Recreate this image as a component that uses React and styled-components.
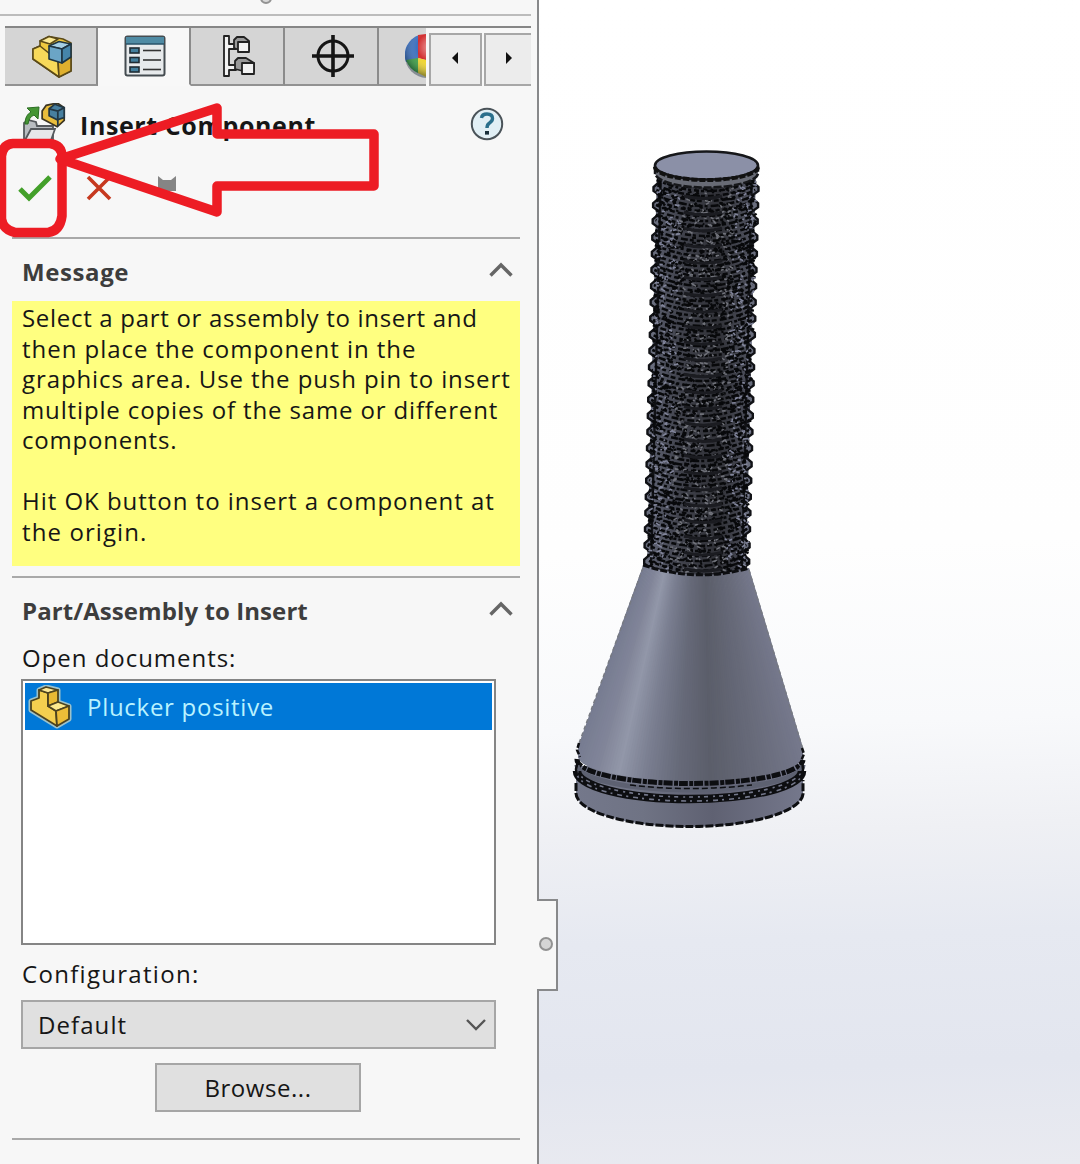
import React from "react";
import styled, { createGlobalStyle } from "styled-components";

const Global = createGlobalStyle`
  * { box-sizing: border-box; }
  body { margin: 0; font-family: "Open Sans", "Noto Sans", sans-serif; color: #161616; }
`;

const Screen = styled.div`
  position: relative;
  display: flex;
  width: 1080px;
  height: 1164px;
  overflow: hidden;
`;
const Panel = styled.aside`
  width: 539px;
  height: 1164px;
  flex: none;
  display: flex;
  flex-direction: column;
  background: #f7f7f7;
  border-right: 2px solid #88898b;
`;
const Splitter = styled.div`
  height: 16px;
  width: 531px;
  flex: none;
  display: flex;
  justify-content: center;
  border-bottom: 2px solid #bcbcbc;
`;
const Grip = styled.i`
  width: 12px;
  height: 12px;
  margin-top: -8px;
  border: 2px solid #929292;
  border-radius: 50%;
  background: #d9d9d9;
`;
const TabBar = styled.nav`
  display: flex;
  width: 526px;
  height: 60px;
  margin: 10px 0 0 5px;
  flex: none;
  border-top: 2px solid #868686;
`;
const Tab = styled.div`
  display: flex;
  align-items: center;
  justify-content: ${(p) => (p.$clipped ? "flex-end" : "center")};
  width: ${(p) => p.$w}px;
  padding-left: ${(p) => (p.$clipped ? 0 : 3)}px;
  overflow: hidden;
  background: ${(p) => (p.$active ? "#f8f8f8" : "#d5d5d5")};
  border-right: ${(p) => (p.$clipped ? 0 : 2)}px solid #8b8b8b;
  border-bottom: 2px solid ${(p) => (p.$active ? "#f8f8f8" : "#929292")};
`;
const Scroller = styled.div`
  display: flex;
  gap: 2px;
  margin: 5px 0 0 3px;
  width: 102px;
`;
const ScrollButton = styled.div`
  width: ${(p) => p.$w}px;
  display: flex;
  align-items: center;
  justify-content: center;
  padding-bottom: 4px;
  background: #ececec;
  border: 2px solid #a7a7a7;
  border-right-width: ${(p) => (p.$last ? 0 : 2)}px;
`;
const TitleRow = styled.header`
  display: flex;
  align-items: center;
  height: 56px;
  margin-top: 10px;
  padding: 0 33px 0 19px;
  flex: none;
`;
const Title = styled.h1`
  flex: 1;
  margin: 2px 0 0 13px;
  font-size: 25px;
  font-weight: 700;
  letter-spacing: ${(p) => p.$track || 0}px;
  white-space: nowrap;
`;
const Actions = styled.div`
  display: flex;
  align-items: center;
  height: 85px;
  padding: 0 0 13px 18px;
  flex: none;
`;
const Gap = styled.span`
  width: ${(p) => p.$w}px;
`;
const Divider = styled.hr`
  width: 508px;
  height: 2px;
  margin: 0 0 0 12px;
  border: 0;
  flex: none;
  background: #a9a9a9;
`;
const SectionHead = styled.div`
  display: flex;
  align-items: center;
  justify-content: space-between;
  height: ${(p) => p.$h}px;
  padding: ${(p) => p.$top || 0}px 24px 0 22px;
  flex: none;
  color: #3d3d3d;
  svg { margin-bottom: 4px; }
`;
const Heading = styled.h2`
  margin: 0 0 2px;
  font-size: 24px;
  font-weight: 700;
  letter-spacing: ${(p) => p.$track}px;
  white-space: nowrap;
`;
const Message = styled.div`
  width: 508px;
  height: 265px;
  margin: 0 0 10px 12px;
  padding: 2px 0 0 10px;
  flex: none;
  background: #ffff80;
`;
const Line = styled.div`
  height: 30.5px;
  line-height: 30.5px;
  font-size: 24px;
  letter-spacing: ${(p) => p.$track || 0}px;
  white-space: nowrap;
`;
const Label = styled.div`
  height: ${(p) => p.$h}px;
  padding: ${(p) => p.$top}px 0 0 22px;
  line-height: 30px;
  font-size: 24px;
  flex: none;
  letter-spacing: ${(p) => p.$track || 0}px;
`;
const List = styled.div`
  width: 475px;
  height: 266px;
  margin-left: 21px;
  padding: 2px;
  flex: none;
  border: 2px solid #858585;
  background: #fff;
`;
const Item = styled.div`
  display: flex;
  align-items: center;
  gap: 15px;
  height: 47px;
  padding-left: 3px;
  color: #b9f2ff;
  background: #0078d7;
  font-size: 24px;
  letter-spacing: ${(p) => p.$track}px;
`;
const Select = styled.div`
  display: flex;
  align-items: center;
  justify-content: space-between;
  width: 475px;
  height: 49px;
  margin-left: 21px;
  padding: 0 7px 0 15px;
  border: 2px solid #a6a6a6;
  background: #e0e0e0;
  flex: none;
  font-size: 24px;
  letter-spacing: ${(p) => p.$track}px;
`;
const Button = styled.div`
  display: flex;
  align-items: center;
  justify-content: center;
  width: 206px;
  height: 49px;
  margin: 14px 0 26px 155px;
  border: 2px solid #a6a6a6;
  background: #e0e0e0;
  flex: none;
  font-size: 24px;
  letter-spacing: ${(p) => p.$track}px;
`;
const Viewport = styled.main`
  flex: 1;
  background: linear-gradient(178deg, #fff 0%, #fefefe 47%, #f8f9fb 62%, #eff0f4 71%, #e6e9f1 80%, #e3e6ef 91%, #e9eaf0 100%);
`;
const Drawing = styled.svg`
  display: block;
`;
const PanelHandle = styled.div`
  position: absolute;
  left: 537px;
  top: 899px;
  width: 21px;
  height: 92px;
  display: flex;
  align-items: center;
  padding: 0 0 3px 2px;
  background: #f7f7f7;
  border: 2px solid #88898b;
  border-left: 0;
`;
const HandleDot = styled.i`
  width: 14px;
  height: 14px;
  border: 2px solid #929292;
  border-radius: 50%;
  background: #d5d5d5;
`;
const Annotation = styled.svg`
  position: absolute;
  left: 0;
  top: 0;
  pointer-events: none;
`;

const Assembly = ({ w, h }) => (
  <svg width={w} height={h} viewBox="0 0 42 43">
    <g stroke="#5b4a18" strokeWidth="1.6" strokeLinejoin="round">
      <path d="M2 14 L9 11 V6 L18 1.500 L32 4 L40 8 V36 L28 42 L2 24 Z" fill="#f0c93f" />
      <path d="M9 6 L18 1.500 L27 4 L19 9 Z" fill="#fbe994" />
      <path d="M2 14 L9 11 L19 19 L27 26 L28 42 L2 24 Z" fill="#f7d95a" />
      <path d="M27 26 L40 22 V36 L28 42 Z" fill="#dfb02e" />
    </g>
    <g stroke="#1f3542" strokeWidth="1.6" strokeLinejoin="round">
      <path d="M18 11 L28 6.500 L40 9 L31 14 Z" fill="#a5cfe4" />
      <path d="M18 11 L31 14 V28 L18 24 Z" fill="#6ba5c6" />
      <path d="M31 14 L40 9 V22 L31 28 Z" fill="#4585aa" />
    </g>
  </svg>
);

const Properties = () => (
  <svg width="42" height="42" viewBox="0 0 42 42">
    <rect x="1.500" y="1.500" width="39" height="39" rx="2" fill="#e7eaec" stroke="#454c51" strokeWidth="2" />
    <rect x="2" y="2" width="38" height="7" fill="#4f8ba4" />
    <path d="M2 9H40" stroke="#28536a" strokeWidth="1.500" />
    {[13, 22.5, 32].map((y) => (
      <g key={y}>
        <rect x="6" y={y} width="9" height="5" fill="#437f9d" stroke="#1f2c34" strokeWidth="1.600" />
        <path d={`M19 ${y + 2.500}H37`} stroke="#333" strokeWidth="1.600" />
      </g>
    ))}
  </svg>
);

const ConfigTree = () => (
  <svg width="34" height="42" viewBox="0 0 34 42" fill="#f3f3f3" stroke="#222" strokeWidth="1.800" strokeLinejoin="round">
    <path d="M2 1 H7 V9 H14 V14 H7 V30 H14 V35 H7 V41 H2 Z" />
    <path d="M12 5 L15 2 H22 L27 6 V15 L20 16 L12 13 Z" fill="#999" />
    <rect x="16" y="7" width="11" height="10" />
    <path d="M13 26 L16 23 H24 L32 28 V36 L25 37 L13 34 Z" fill="#999" />
    <rect x="20" y="28" width="12" height="11" />
  </svg>
);

const Crosshair = () => (
  <svg width="42" height="42" viewBox="0 0 42 42" fill="none" stroke="#151515">
    <circle cx="21" cy="21" r="15" strokeWidth="3" />
    <path d="M21 0V42M0 21H42" strokeWidth="3.600" />
  </svg>
);

const Appearance = () => (
  <svg width="21" height="44" viewBox="0 0 21 44">
    <defs>
      <radialGradient id="shine" cx=".6" cy=".3" r=".65">
        <stop offset="0" stopColor="#fff" stopOpacity=".6" />
        <stop offset=".5" stopColor="#fff" stopOpacity="0" />
        <stop offset="1" stopColor="#123" stopOpacity=".4" />
      </radialGradient>
    </defs>
    <path d="M14 1 A21 21 0 0 0 1 28 L14 25 Z" fill="#3c70bf" />
    <path d="M13 1 L21 0 V26 L13 24 Z" fill="#d22f31" />
    <path d="M1 26 L13 24 V39 A22 22 0 0 1 1 26" fill="#3ea342" />
    <path d="M13 24 L21 26 V43 L13 39 Z" fill="#f0d52d" />
    <circle cx="22" cy="22" r="22" fill="url(#shine)" />
  </svg>
);

const InsertIcon = () => (
  <svg width="48" height="42" viewBox="0 0 48 42">
    <path d="M5 39 V20 L9 17 L17 19 L18 23 H34 V39 Z" fill="#b9bdc1" stroke="#55595d" strokeWidth="1.800" />
    <path d="M5 39 L12 26 H36 L31 40 Z" fill="#e7e8ea" stroke="#55595d" strokeWidth="1.800" />
    <path d="M6 21 Q6 12 12 9 L8 5 L20 4 L19 16 L15 12 Q10 14 9 21 Z" fill="#459534" stroke="#2b6e22" />
    <g transform="translate(22 0) scale(.58)">
      <path d="M2 14 L9 4 L28 0 L40 8 V30 L28 41 L2 27 Z" fill="#e9bd3c" stroke="#3c3522" strokeWidth="3" />
      <path d="M14 10 L24 2 L40 8 V25 L28 29 L14 22 Z" fill="#477f9f" stroke="#223744" strokeWidth="3" />
      <path d="M14 10 L29 14 L40 8 M29 14 V40" fill="none" stroke="#223744" strokeWidth="3" />
    </g>
  </svg>
);

const PartIcon = () => (
  <svg width="44" height="44" viewBox="0 0 44 44" strokeLinejoin="round">
    <path d="M3 16 L11 13 V5 L18 2 L30 5 V17 L41 21 V34 L29 41 L3 25 Z" fill="#f5d35a" stroke="#9cc2ca" strokeWidth="5" />
    <g stroke="#4d431f" strokeWidth="1.800">
      <path d="M3 16 L11 13 V5 L20 8 V21 L28 26 L29 41 L3 25 Z" fill="#f4cf4f" />
      <path d="M11 5 L18 2 L30 5 L20 8 Z" fill="#fcea9a" />
      <path d="M20 8 L30 5 V17 L20 21 Z" fill="#e7b934" />
      <path d="M20 21 L30 17 L41 21 L28 26 Z" fill="#fce98e" />
      <path d="M28 26 L41 21 V34 L29 41 Z" fill="#edbd38" />
    </g>
  </svg>
);

const Help = () => (
  <svg width="34" height="34" viewBox="0 0 34 34">
    <circle cx="17" cy="17" r="15.200" fill="#e1eff5" stroke="#4a5359" strokeWidth="2" />
    <path d="M11.500 11 Q12 7 17 7 Q22.500 7 22.500 11.500 Q22.500 14 19.500 16 Q17 17.500 17 21" fill="none" stroke="#2a6f8c" strokeWidth="3.400" />
    <rect x="15" y="24" width="4" height="3.600" fill="#172e3a" />
  </svg>
);

const CaretUp = () => (
  <svg width="24" height="16" viewBox="0 0 24 16"><path d="M1.500 13.500 L12 3 L22.500 13.500" fill="none" stroke="#666" strokeWidth="3.4" /></svg>
);

const crests = Array.from({ length: 24 }, (_, i) => 190 + i * 16.2);
const leftEdge = (y) => 657 - ((y - 170) / 400) * 10;
const rightEdge = (y) => 756 - ((y - 170) / 400) * 10;
const rows = Array.from({ length: 78 }, (_, i) => 188 + i * 5);

const noise = (n) => {
  const v = Math.sin(n * 127.1 + 11.7) * 43758.5453;
  return v - Math.floor(v);
};
const flecks = Array.from({ length: 2200 }, (_, i) => {
  const across = noise(i);
  const down = noise(i + 5000);
  const y = 186 + down * 390;
  return {
    x: leftEdge(y) + across * (rightEdge(y) - leftEdge(y)),
    y: y - Math.pow(across * 2 - 1, 2) * 12,
    dx: 1 + noise(i + 9000) * 3,
    dy: (noise(i + 13000) - 0.5) * 5,
    light: i % 5 < 2,
    edge: Math.abs(across * 2 - 1),
  };
});

const shades = [
  [0, 118, 123, 144],
  [0.12, 129, 133, 153],
  [0.21, 146, 151, 169],
  [0.32, 122, 126, 144],
  [0.45, 102, 106, 121],
  [0.58, 91, 94, 106],
  [0.75, 102, 105, 120],
  [1, 119, 122, 142],
];
const shadeAt = (t) => {
  const k = Math.max(1, shades.findIndex((s) => s[0] >= t));
  const a = shades[k - 1], b = shades[k];
  const f = (t - a[0]) / (b[0] - a[0]);
  return `rgb(${[1, 2, 3].map((c) => Math.round(a[c] + (b[c] - a[c]) * f)).join(",")})`;
};
const FACETS = 90;
const facets = Array.from({ length: FACETS }, (_, i) => {
  const t = i / FACETS;
  const u = Math.min(1, t + 1.6 / FACETS);
  return {
    d: `M${645 + t * 103} 560 L${645 + u * 103} 560 L${557 + u * 263} 796 L${557 + t * 263} 796 Z`,
    fill: shadeAt(t),
  };
});

const Bolt = () => (
  <Drawing width="541" height="1164" viewBox="539 0 541 1164">
    <defs>
      <linearGradient id="base" x1="575" x2="804" y1="0" y2="0" gradientUnits="userSpaceOnUse">
        <stop offset="0" stopColor="#74788b" />
        <stop offset=".3" stopColor="#6f7384" />
        <stop offset=".6" stopColor="#5f6172" />
        <stop offset="1" stopColor="#75788c" />
      </linearGradient>
      <linearGradient id="rod" x1="645" x2="758" y1="0" y2="0" gradientUnits="userSpaceOnUse">
        <stop offset="0" stopColor="#626677" /><stop offset=".3" stopColor="#41434d" />
        <stop offset=".65" stopColor="#303137" /><stop offset="1" stopColor="#555866" />
      </linearGradient>
      <clipPath id="rodClip"><path d="M655 166 H759 L750 570 Q696 586 643 568 Z" /></clipPath>
      <clipPath id="coneClip"><path d="M643 565 Q696 583 749 568 L803 748 V759 A113 25 0 0 1 578 757 V747 Z" /></clipPath>
    </defs>

    <path d="M657 170 L647 568 Q695 584 746 570 L756 170 Z" fill="url(#rod)" />
    {crests.map((y, i) => {
      const l = leftEdge(y), r = rightEdge(y);
      return (
        <path key={i} d={`M${l + 4} ${y - 9} L${l - 3} ${y - 3} V${y + 1} L${l + 4} ${y + 6} Z M${r - 4} ${y - 9} L${r + 3} ${y - 3} V${y + 1} L${r - 4} ${y + 6} Z`} fill="#696d7d" stroke="#111216" strokeWidth="2.4" />
      );
    })}
    <g clipPath="url(#rodClip)" fill="none">
      {rows.map((y, i) => {
        const l = leftEdge(y), r = rightEdge(y);
        return (
          <path key={i} d={`M${l} ${y - 8} Q${(l + r) / 2} ${y + 14} ${r} ${y - 8}`} stroke="#08090b" strokeWidth="2.500" strokeDasharray={`${5 + (i % 4)} 2 ${3 + (i % 3)} 3`} strokeDashoffset={(i * 7) % 13} />
        );
      })}
      {flecks.map((f, i) => (
        <path
          key={i}
          d={`M${f.x.toFixed(1)} ${f.y.toFixed(1)} l${f.dx.toFixed(1)} ${f.dy.toFixed(1)}`}
          stroke={f.light ? (f.edge > 0.55 ? "#80849a" : "#70727a") : "#08090b"}
          strokeWidth={f.light ? 1.6 : 2.2}
        />
      ))}
      {crests.map((y, i) => (
        <path key={i} d={`M684 ${y + 6} Q704 ${y + 11} 722 ${y + 6}`} stroke="#1b1c21" strokeWidth="3" />
      ))}
    </g>
    <path d="M655 166 V173 A51.5 14.500 0 0 0 758 173 V166" fill="#686b75" stroke="#16171a" strokeWidth="2.500" strokeDasharray="8 2" />
    <ellipse cx="706.500" cy="165.500" rx="51.500" ry="14" fill="#8b90a7" stroke="#16171a" strokeWidth="2.600" />
    <path d="M655 167 A51.5 13 0 0 0 758 167" fill="none" stroke="#111" strokeWidth="4" strokeDasharray="6 2" />

    <path d="M576 766 V792 A113.5 34 0 0 0 803 794 V764 Z" fill="url(#base)" />
    <g clipPath="url(#coneClip)">
      {facets.map((f, i) => <path key={i} d={f.d} fill={f.fill} />)}
    </g>
    <g fill="none" stroke="#0d0e11">
      <path d="M643 565 Q696 583 749 568" strokeWidth="3" strokeDasharray="7 2" />
      <path d="M643 568 L578 746 M749 570 L803 750" stroke="#777a82" strokeWidth="1.500" strokeDasharray="4 3" />
      <path d="M579 743 L577 750 L580 757 M802 748 L804 754 L801 761" strokeWidth="2.500" strokeDasharray="5 2" />
      <path d="M577 759 A113 24 0 0 0 803 760" strokeWidth="5" strokeDasharray="9 1.5 4 1" />
      <path d="M577 765 A113 25 0 0 0 803 765" stroke="#5d6171" strokeWidth="5" />
      <path d="M630 785 Q690 792 752 785" strokeWidth="1.500" strokeDasharray="6 3" />
      <path d="M577 771 A112.5 28 0 0 0 802 771" strokeWidth="8.500" />
      <path d="M577 769 A112.5 28 0 0 0 802 769" stroke="#73778a" strokeWidth="1.600" strokeDasharray="4 5 2 4" />
      <path d="M577 773 A112.5 28 0 0 0 802 773" stroke="#73778a" strokeWidth="1.600" strokeDasharray="5 4 2 5" />
      <path d="M578 761 L576 769 L577 776 M802 760 L803 769 L802 776" strokeWidth="2.500" />
      <path d="M576 783 V792 A113.5 33.500 0 0 0 803 794 V780" strokeWidth="3" strokeDasharray="8 2" />
    </g>
  </Drawing>
);

export default function App() {
  return (
    <>
      <Global />
      <Screen>
        <Panel>
          <Splitter><Grip /></Splitter>
          <TabBar>
            <Tab $w={93}><Assembly w={42} h={43} /></Tab>
            <Tab $w={93} $active><Properties /></Tab>
            <Tab $w={94}><ConfigTree /></Tab>
            <Tab $w={94}><Crosshair /></Tab>
            <Tab $w={47} $clipped><Appearance /></Tab>
            <Scroller>
              <ScrollButton $w={53}><svg width="7" height="12"><path d="M6 0V12L0 6Z" fill="#111" /></svg></ScrollButton>
              <ScrollButton $w={47} $last><svg width="7" height="12"><path d="M1 0V12L7 6Z" fill="#111" /></svg></ScrollButton>
            </Scroller>
          </TabBar>
          <TitleRow>
            <InsertIcon />
            <Title $track={0.6}>Insert Component</Title>
            <Help />
          </TitleRow>
          <Actions>
            <svg width="34" height="28" viewBox="0 0 34 28"><path d="M2 15 L11 24 L32 3" fill="none" stroke="#43a02a" strokeWidth="5" /></svg>
            <Gap $w={34} />
            <svg width="26" height="26" viewBox="0 0 26 26"><path d="M2 2 L24 24 M24 2 L2 24" stroke="#c6391f" strokeWidth="3.600" /></svg>
            <Gap $w={45} />
            <svg width="20" height="26" viewBox="0 0 20 26"><path d="M1 1 L6 5 H14 L19 1 V16 H12 L10 24 L8 16 H1 Z" fill="#858585" /></svg>
          </Actions>
          <Divider />
          <SectionHead $h={62} $top={4}><Heading $track={0.6}>Message</Heading><CaretUp /></SectionHead>
          <Message>
            <Line $track={0.7}>Select a part or assembly to insert and</Line>
            <Line $track={0.96}>then place the component in the</Line>
            <Line $track={0.9}>graphics area. Use the push pin to insert</Line>
            <Line $track={0.86}>multiple copies of the same or different</Line>
            <Line $track={0.8}>components.</Line>
            <Line />
            <Line $track={0.97}>Hit OK button to insert a component at</Line>
            <Line $track={1.1}>the origin.</Line>
          </Message>
          <Divider />
          <SectionHead $h={64} $top={2}><Heading $track={0.08}>Part/Assembly to Insert</Heading><CaretUp /></SectionHead>
          <Label $h={37} $top={1} $track={0.97}>Open documents:</Label>
          <List>
            <Item $track={0.72}><PartIcon />Plucker positive</Item>
          </List>
          <Label $h={55} $top={14} $track={1.3}>Configuration:</Label>
          <Select $track={1.08}>Default<svg width="22" height="14"><path d="M2 2 L11 11 L20 2" fill="none" stroke="#555" strokeWidth="2.400" /></svg></Select>
          <Button $track={0.55}>Browse...</Button>
          <Divider />
        </Panel>
        <Viewport><Bolt /></Viewport>
        <PanelHandle><HandleDot /></PanelHandle>
        <Annotation width="400" height="260" viewBox="0 0 400 260" fill="none" stroke="#ed1c24" strokeLinejoin="round">
          <path d="M13 143.500 H50 Q62 145 62 157 V216 Q60 231 48 232.500 H15 Q3 230 1.500 219 V156 Q3 144 13 143.500 Z" strokeWidth="9.500" />
          <path d="M60 159 L217 108 V134 H374 V186 H217 V212 Z" strokeWidth="9.500" />
        </Annotation>
      </Screen>
    </>
  );
}
